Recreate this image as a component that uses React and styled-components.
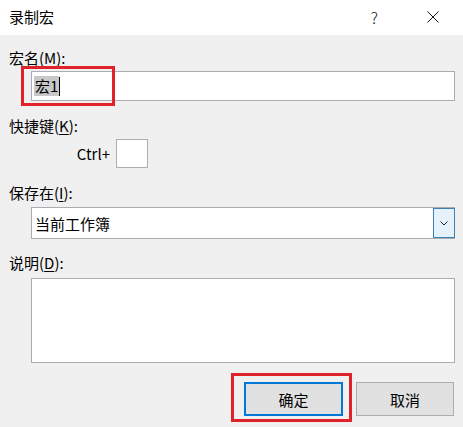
import React from "react";
import styled, { createGlobalStyle } from "styled-components";

const GlobalStyle = createGlobalStyle`
  html, body {
    margin: 0;
    padding: 0;
    background: #f0f0f0;
  }
  body {
    font-family: "Noto Sans CJK SC", "Noto Sans", sans-serif;
    color: #000;
  }
`;

const Window = styled.div`
  width: 463px;
  height: 427px;
  overflow: hidden;
  display: flex;
  flex-direction: column;
  background: #f0f0f0;
`;

const TitleBar = styled.div`
  height: 35px;
  flex-shrink: 0;
  background: #ffffff;
  display: flex;
  align-items: center;
  padding-left: 9px;
`;

const Title = styled.div`
  font-size: 15px;
  line-height: 20px;
  margin-top: -1px;
`;

const HelpMark = styled.div`
  margin-left: auto;
  font-size: 16px;
  font-weight: 300;
  line-height: 20px;
  color: #111;
  margin-top: -1px;
`;

const CloseButton = styled.div`
  width: 12px;
  height: 12px;
  margin: -1px 24px 0 49px;
  display: flex;
`;

const Body = styled.div`
  padding: 13px 8px 0 9px;
  display: flex;
  flex-direction: column;
`;

const Label = styled.div`
  font-size: 15px;
  line-height: 20px;
  height: 20px;
  margin-top: ${(p) => p.$gap || 0}px;
`;

const Key = styled.span`
  text-decoration: underline;
  text-underline-offset: 2px;
  text-decoration-thickness: 1px;
`;

const Indent = styled.div`
  margin-left: 22px;
  margin-top: ${(p) => p.$gap || 0}px;
  position: relative;
`;

const TextBox = styled.div`
  height: 30px;
  box-sizing: border-box;
  border: 1px solid #abadb3;
  background: #fff;
  display: flex;
  align-items: center;
  padding-left: 2px;
  font-size: 15px;
`;

const Selected = styled.span`
  background: #c8c8c8;
  line-height: 20px;
  padding: 0 1px;
`;

const Caret = styled.span`
  width: 1px;
  height: 19px;
  background: #000;
`;

const Annotation = styled.div`
  position: absolute;
  top: ${(p) => p.$top}px;
  left: ${(p) => p.$left}px;
  width: ${(p) => p.$w}px;
  height: ${(p) => p.$h}px;
  border: 3px solid #e0232b;
  box-sizing: border-box;
  pointer-events: none;
`;

const ShortcutRow = styled.div`
  display: flex;
  align-items: center;
  margin-left: 66px;
  margin-top: 3px;
  gap: 6px;
`;

const CtrlLabel = styled.div`
  width: 35px;
  text-align: right;
  font-size: 15px;
  line-height: 20px;
`;

const KeyBox = styled.div`
  width: 32px;
  height: 29px;
  box-sizing: border-box;
  border: 1px solid #abadb3;
  background: #fff;
`;

const Select = styled.div`
  height: 32px;
  box-sizing: border-box;
  border: 1px solid #abadb3;
  background: #fff;
  display: flex;
  align-items: stretch;
`;

const SelectValue = styled.div`
  flex: 1;
  display: flex;
  align-items: center;
  padding-left: 3px;
  font-size: 15px;
`;

const DropButton = styled.div`
  width: 22px;
  margin: 0 -1px 0 0;
  box-sizing: border-box;
  border: 1px solid #3c7fb1;
  background: #e5f1fb;
  display: flex;
  align-items: center;
  justify-content: center;
`;

const TextArea = styled.div`
  height: 85px;
  box-sizing: border-box;
  border: 1px solid #abadb3;
  background: #fff;
`;

const ButtonRow = styled.div`
  display: flex;
  justify-content: flex-end;
  gap: 13px;
  margin-top: 19px;
  padding-right: 1px;
`;

const ButtonWrap = styled.div`
  position: relative;
  display: flex;
`;

const Button = styled.div`
  width: ${(p) => p.$w}px;
  height: 34px;
  box-sizing: border-box;
  border: ${(p) => (p.$primary ? "2px solid #0078d7" : "1px solid #adadad")};
  background: #e1e1e1;
  display: flex;
  align-items: center;
  justify-content: center;
  font-size: 15px;
`;

const Chevron = () => (
  <svg width="8" height="5" viewBox="0 0 8 5">
    <path d="M0.5 0.5 L4 4 L7.5 0.5" fill="none" stroke="#222" strokeWidth="1" />
  </svg>
);

const CloseIcon = () => (
  <svg width="12" height="12" viewBox="0 0 12 12">
    <path d="M0.5 0.5 L11.5 11.5 M11.5 0.5 L0.5 11.5" stroke="#111" strokeWidth="1" />
  </svg>
);

export default function App() {
  return (
    <>
      <GlobalStyle />
      <Window>
        <TitleBar>
          <Title>录制宏</Title>
          <HelpMark>?</HelpMark>
          <CloseButton>
            <CloseIcon />
          </CloseButton>
        </TitleBar>
        <Body>
          <Label>
            宏名(<Key>M</Key>):
          </Label>
          <Indent $gap={3}>
            <TextBox>
              <Selected>宏1</Selected>
              <Caret />
            </TextBox>
            <Annotation $top={-5} $left={-10} $w={94} $h={40} />
          </Indent>

          <Label $gap={15}>
            快捷键(<Key>K</Key>):
          </Label>
          <ShortcutRow>
            <CtrlLabel>Ctrl+</CtrlLabel>
            <KeyBox />
          </ShortcutRow>

          <Label $gap={15}>
            保存在(<Key>I</Key>):
          </Label>
          <Indent $gap={4}>
            <Select>
              <SelectValue>当前工作簿</SelectValue>
              <DropButton>
                <Chevron />
              </DropButton>
            </Select>
          </Indent>

          <Label $gap={14}>
            说明(<Key>D</Key>):
          </Label>
          <Indent $gap={5}>
            <TextArea />
          </Indent>

          <ButtonRow>
            <ButtonWrap>
              <Button $w={99} $primary>确定</Button>
              <Annotation $top={-9} $left={-13} $w={121} $h={49} />
            </ButtonWrap>
            <ButtonWrap>
              <Button $w={98}>取消</Button>
            </ButtonWrap>
          </ButtonRow>
        </Body>
      </Window>
    </>
  );
}
